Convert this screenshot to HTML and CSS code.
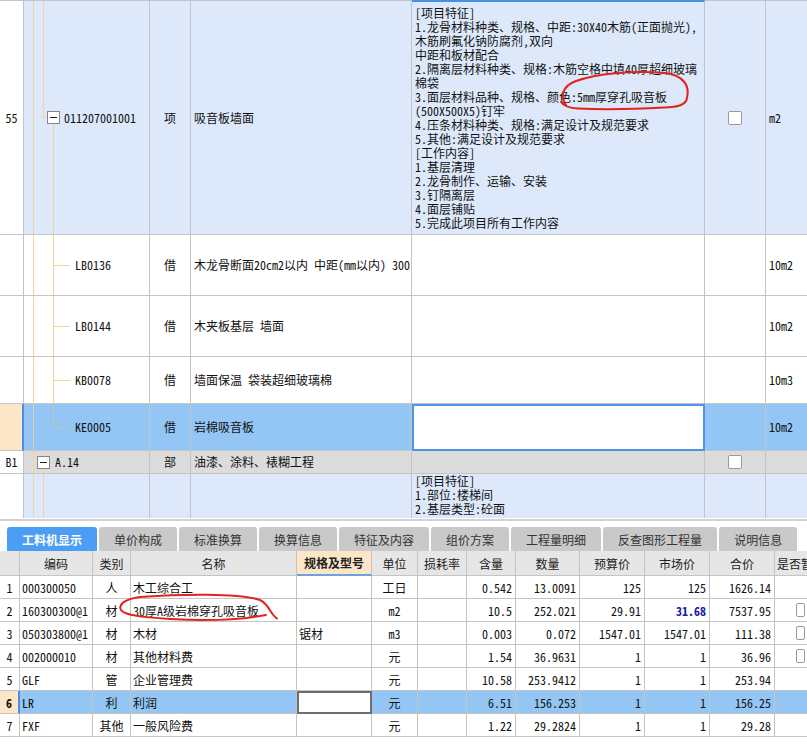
FILE: index.html
```html
<!DOCTYPE html>
<html lang="zh-CN">
<head>
<meta charset="utf-8">
<title>工料机显示</title>
<link rel="stylesheet" href="styles.css">
</head>
<body>
<div class="page">
  <section class="grid-top">
    <div class="row r-item">
      <div class="c c-no">55</div>
      <div class="c c-code tree-item"><span class="tbox"></span><span class="code-txt">011207001001</span></div>
      <div class="c c-type">项</div>
      <div class="c c-name">吸音板墙面</div>
      <div class="c c-feat feat-top">
        <div class="lines">
          <div>[项目特征]</div>
          <div>1.龙骨材料种类、规格、中距:30X40木筋(正面抛光),</div>
          <div>木筋刷氟化钠防腐剂,双向</div>
          <div>中距和板材配合</div>
          <div>2.隔离层材料种类、规格:木筋空格中填40厚超细玻璃</div>
          <div>棉袋</div>
          <div>3.面层材料品种、规格、颜色:5mm厚穿孔吸音板</div>
          <div>(500X500X5)钉牢</div>
          <div>4.压条材料种类、规格:满足设计及规范要求</div>
          <div>5.其他:满足设计及规范要求</div>
          <div>[工作内容]</div>
          <div>1.基层清理</div>
          <div>2.龙骨制作、运输、安装</div>
          <div>3.钉隔离层</div>
          <div>4.面层铺贴</div>
          <div>5.完成此项目所有工作内容</div>
        </div>
      </div>
      <div class="c c-chk"><span class="chk"></span></div>
      <div class="c c-unit">m2</div>
    </div>

    <div class="row r-sub r61">
      <div class="c c-no"></div>
      <div class="c c-code tree-child"><span class="code-txt">LB0136</span></div>
      <div class="c c-type">借</div>
      <div class="c c-name">木龙骨断面20cm2以内 中距(mm以内) 300</div>
      <div class="c c-feat"></div>
      <div class="c c-chk"></div>
      <div class="c c-unit">10m2</div>
    </div>

    <div class="row r-sub r61">
      <div class="c c-no"></div>
      <div class="c c-code tree-child"><span class="code-txt">LB0144</span></div>
      <div class="c c-type">借</div>
      <div class="c c-name">木夹板基层 墙面</div>
      <div class="c c-feat"></div>
      <div class="c c-chk"></div>
      <div class="c c-unit">10m2</div>
    </div>

    <div class="row r-sub r47">
      <div class="c c-no"></div>
      <div class="c c-code tree-child"><span class="code-txt">KB0078</span></div>
      <div class="c c-type">借</div>
      <div class="c c-name">墙面保温 袋装超细玻璃棉</div>
      <div class="c c-feat"></div>
      <div class="c c-chk"></div>
      <div class="c c-unit">10m3</div>
    </div>

    <div class="row r-sel r47">
      <div class="c c-no"></div>
      <div class="c c-code tree-last"><span class="code-txt">KE0005</span></div>
      <div class="c c-type">借</div>
      <div class="c c-name">岩棉吸音板</div>
      <div class="c c-feat edit"></div>
      <div class="c c-chk"></div>
      <div class="c c-unit">10m2</div>
    </div>

    <div class="row r-part">
      <div class="c c-no">B1</div>
      <div class="c c-code tree-part"><span class="tbox"></span><span class="code-txt">A.14</span></div>
      <div class="c c-type">部</div>
      <div class="c c-name">油漆、涂料、裱糊工程</div>
      <div class="c c-feat"></div>
      <div class="c c-chk"><span class="chk"></span></div>
      <div class="c c-unit"></div>
    </div>

    <div class="row r-next">
      <div class="c c-no"></div>
      <div class="c c-code tree-next"></div>
      <div class="c c-type"></div>
      <div class="c c-name"></div>
      <div class="c c-feat feat-next">
        <div class="lines">
          <div>[项目特征]</div>
          <div>1.部位:楼梯间</div>
          <div>2.基层类型:砼面</div>
        </div>
      </div>
      <div class="c c-chk"></div>
      <div class="c c-unit"></div>
    </div>
  </section>

  <div class="split"></div>

  <nav class="tabbar">
    <span class="tab active">工料机显示</span>
    <span class="tab">单价构成</span>
    <span class="tab">标准换算</span>
    <span class="tab">换算信息</span>
    <span class="tab">特征及内容</span>
    <span class="tab">组价方案</span>
    <span class="tab">工程量明细</span>
    <span class="tab">反查图形工程量</span>
    <span class="tab">说明信息</span>
  </nav>

  <section class="btable">
    <div class="brow bhead">
      <div class="b"></div>
      <div class="b ctr">编码</div>
      <div class="b ctr">类别</div>
      <div class="b ctr">名称</div>
      <div class="b ctr hsel">规格及型号</div>
      <div class="b ctr">单位</div>
      <div class="b ctr">损耗率</div>
      <div class="b ctr">含量</div>
      <div class="b ctr">数量</div>
      <div class="b ctr">预算价</div>
      <div class="b ctr">市场价</div>
      <div class="b ctr">合价</div>
      <div class="b last">是否暂估</div>
    </div>

    <div class="brow">
      <div class="b ctr">1</div>
      <div class="b">000300050</div>
      <div class="b ctr">人</div>
      <div class="b">木工综合工</div>
      <div class="b"></div>
      <div class="b ctr">工日</div>
      <div class="b"></div>
      <div class="b num">0.542</div>
      <div class="b num">13.0091</div>
      <div class="b num">125</div>
      <div class="b num">125</div>
      <div class="b num">1626.14</div>
      <div class="b last"></div>
    </div>

    <div class="brow">
      <div class="b ctr">2</div>
      <div class="b">160300300@1</div>
      <div class="b ctr">材</div>
      <div class="b">30厚A级岩棉穿孔吸音板</div>
      <div class="b"></div>
      <div class="b ctr">m2</div>
      <div class="b"></div>
      <div class="b num">10.5</div>
      <div class="b num">252.021</div>
      <div class="b num">29.91</div>
      <div class="b num mkt">31.68</div>
      <div class="b num">7537.95</div>
      <div class="b last"><span class="chk"></span></div>
    </div>

    <div class="brow">
      <div class="b ctr">3</div>
      <div class="b">050303800@1</div>
      <div class="b ctr">材</div>
      <div class="b">木材</div>
      <div class="b">锯材</div>
      <div class="b ctr">m3</div>
      <div class="b"></div>
      <div class="b num">0.003</div>
      <div class="b num">0.072</div>
      <div class="b num">1547.01</div>
      <div class="b num">1547.01</div>
      <div class="b num">111.38</div>
      <div class="b last"><span class="chk"></span></div>
    </div>

    <div class="brow">
      <div class="b ctr">4</div>
      <div class="b">002000010</div>
      <div class="b ctr">材</div>
      <div class="b">其他材料费</div>
      <div class="b"></div>
      <div class="b ctr">元</div>
      <div class="b"></div>
      <div class="b num">1.54</div>
      <div class="b num">36.9631</div>
      <div class="b num">1</div>
      <div class="b num">1</div>
      <div class="b num">36.96</div>
      <div class="b last"><span class="chk"></span></div>
    </div>

    <div class="brow">
      <div class="b ctr">5</div>
      <div class="b">GLF</div>
      <div class="b ctr">管</div>
      <div class="b">企业管理费</div>
      <div class="b"></div>
      <div class="b ctr">元</div>
      <div class="b"></div>
      <div class="b num">10.58</div>
      <div class="b num">253.9412</div>
      <div class="b num">1</div>
      <div class="b num">1</div>
      <div class="b num">253.94</div>
      <div class="b last"></div>
    </div>

    <div class="brow bsel">
      <div class="b ctr rno">6</div>
      <div class="b">LR</div>
      <div class="b ctr">利</div>
      <div class="b">利润</div>
      <div class="b editcell"></div>
      <div class="b ctr">元</div>
      <div class="b"></div>
      <div class="b num">6.51</div>
      <div class="b num">156.253</div>
      <div class="b num">1</div>
      <div class="b num">1</div>
      <div class="b num">156.25</div>
      <div class="b last"></div>
    </div>

    <div class="brow">
      <div class="b ctr">7</div>
      <div class="b">FXF</div>
      <div class="b ctr">其他</div>
      <div class="b">一般风险费</div>
      <div class="b"></div>
      <div class="b ctr">元</div>
      <div class="b"></div>
      <div class="b num">1.22</div>
      <div class="b num">29.2824</div>
      <div class="b num">1</div>
      <div class="b num">1</div>
      <div class="b num">29.28</div>
      <div class="b last"></div>
    </div>
  </section>

  <svg class="marks" width="807" height="752" viewBox="0 0 807 752" aria-hidden="true">
    <path d="M566,105 C560,97 562,86 576,81 C596,74 632,70 664,73 C684,75 690,86 687,98 C686,105 678,107 664,107.5 C636,109 600,109.5 578,108.5 C568,108 563,105 561,102" />
    <path d="M277,618.5 C270,614 269,604 260,600 C240,593 180,594 140,597 C124,599 118,605 121,610 C124,615 140,617 170,619 C205,621 240,620 266,615" />
  </svg>
</div>
</body>
</html>
```

FILE: styles.css
```css
* { box-sizing: border-box; }

html, body {
  margin: 0;
  padding: 0;
  background: #ffffff;
}

body {
  font-family: "Noto Sans Mono CJK SC", "Noto Sans CJK SC", sans-serif;
  font-size: 12px;
  color: #111111;
}

.page {
  position: relative;
  width: 807px;
  height: 752px;
  overflow: hidden;
}

/* ---------- top grid ---------- */
.grid-top {
  border-top: 1px solid #c4c4c4;
}

.row {
  display: grid;
  grid-template-columns: 24px 126px 41px 221px 293px 61px 42px;
}

.c {
  border-right: 1px solid #c4c4c4;
  border-bottom: 1px solid #c4c4c4;
  display: flex;
  align-items: center;
  white-space: nowrap;
  overflow: hidden;
  line-height: 14px;
}

.c-no { justify-content: center; background: #ffffff; }
.c-type { justify-content: center; }
.c-name { padding-left: 3px; }
.c-feat { padding-left: 3px; }
.c-chk { justify-content: center; }
.c-unit { padding-left: 3px; border-right: none; }

.r-item { height: 234px; }
.r-item .c:not(.c-no) { background: #dde9fb; }
.r-item .c-feat { border-top: 2px solid #4a90e2; margin-top: -1px; }

.r61 { height: 61px; }
.r47 { height: 47px; }

.r-sel .c:not(.c-no) { background: #93c6f4; }
.r-sel .c-no { background: #fde6c8; border-right: 2px solid #4a8fe0; }
.r-sel .c-feat.edit {
  background: #ffffff;
  border: 2px solid #4f94e4;
}

.r-part { height: 23px; }
.r-part .c:not(.c-no) { background: #dcdcdc; }

.r-next { height: 44px; }
.r-next .c:not(.c-no) { background: #dde9fb; border-bottom: none; }
.r-next .c-no { border-bottom: none; }

.lines div { height: 14px; line-height: 14px; }
.feat-next { align-items: flex-start; }
.feat-next .lines { margin-top: 0; }

/* tree */
.c-code { position: relative; }
.code-txt { color: #111; }

.tree-item {
  padding-left: 23px;
  background:
    linear-gradient(#efd3a2, #efd3a2) 9px 0 / 1px 100% no-repeat,
    linear-gradient(#efd3a2, #efd3a2) 19px 0 / 1px 50% no-repeat,
    linear-gradient(#efd3a2, #efd3a2) 19px 50% / 4px 1px no-repeat,
    linear-gradient(#efd3a2, #efd3a2) 29px 100% / 1px calc(50% - 6px) no-repeat,
    #dde9fb !important;
}
.tree-item .code-txt { margin-left: 4px; }

.tree-child {
  padding-left: 51px;
  background:
    linear-gradient(#efd3a2, #efd3a2) 9px 0 / 1px 100% no-repeat,
    linear-gradient(#efd3a2, #efd3a2) 29px 0 / 1px 100% no-repeat,
    linear-gradient(#efd3a2, #efd3a2) 29px 50% / 17px 1px no-repeat,
    #ffffff;
}

.tree-last {
  padding-left: 51px;
  background:
    linear-gradient(#e2cfa8, #e2cfa8) 9px 0 / 1px 100% no-repeat,
    linear-gradient(#c9c2ae, #c9c2ae) 29px 0 / 1px 50% no-repeat,
    linear-gradient(#c9c2ae, #c9c2ae) 29px 50% / 17px 1px no-repeat,
    #93c6f4 !important;
}

.tree-part {
  padding-left: 13px;
  background:
    linear-gradient(#efd3a2, #efd3a2) 9px 0 / 1px 100% no-repeat,
    linear-gradient(#efd3a2, #efd3a2) 19px 100% / 1px calc(50% - 6px) no-repeat,
    #dcdcdc !important;
}
.tree-part .code-txt { margin-left: 5px; }

.tree-next {
  background:
    linear-gradient(#efd3a2, #efd3a2) 9px 0 / 1px 100% no-repeat,
    linear-gradient(#efd3a2, #efd3a2) 19px 0 / 1px 100% no-repeat,
    #dde9fb !important;
}

.tbox {
  flex: none;
  width: 13px;
  height: 13px;
  border: 1px solid #868686;
  background: #ffffff;
  position: relative;
}
.tbox::after {
  content: "";
  position: absolute;
  left: 2px;
  right: 2px;
  top: 5px;
  height: 1px;
  background: #222;
}

.chk {
  display: inline-block;
  width: 14px;
  height: 14px;
  border: 1px solid #9a9a9a;
  border-radius: 2px;
  background: #ffffff;
}

/* ---------- splitter & tabs ---------- */
.split {
  height: 2px;
  margin-top: 1px;
  background: #d2d2d2;
}

.tabbar {
  display: flex;
  gap: 2px;
  padding: 6px 0 0 7px;
  height: 30px;
  background: #ffffff;
}

.tab {
  height: 24px;
  padding: 0 15px;
  display: flex;
  align-items: center;
  background: #c9c9c9;
  color: #333333;
  border-radius: 3px 3px 0 0;
  font-family: "Noto Sans CJK SC", sans-serif;
  font-size: 12px;
  white-space: nowrap;
}
.tab.active {
  background: #4b9ef3;
  color: #ffffff;
  font-weight: bold;
}

/* ---------- bottom table ---------- */
.brow {
  display: grid;
  grid-template-columns: 20px 73px 38px 166px 75px 46px 49px 49px 64px 65px 65px 65px 32px;
  height: 23px;
}

.b {
  border-right: 1px solid #c4c4c4;
  border-bottom: 1px solid #c4c4c4;
  display: flex;
  align-items: center;
  padding: 0 2px;
  white-space: nowrap;
  overflow: hidden;
  background: #ffffff;
}
.b.ctr { justify-content: center; }
.b.num { justify-content: flex-end; padding-right: 3px; }
.b.last { border-right: none; padding-left: 21px; }

.bhead { height: 25px; }
.bhead .b {
  background: #e6e6e6;
  font-family: "Noto Sans CJK SC", sans-serif;
  color: #222;
}
.bhead .b.last { padding-left: 2px; }
.bhead .hsel {
  background: #fde6c8;
  font-weight: bold;
  border-bottom: 2px solid #6fa2da;
}

.mkt { color: #1a1aa6; font-weight: bold; }

.bsel .b { background: #93c6f4; }
.bsel .rno {
  background: #fde6c8;
  font-weight: bold;
  border-right: 2px solid #4a8fe0;
}
.bsel .editcell {
  background: #ffffff;
  border: 2px solid #6e6e6e;
}

/* ---------- red hand-drawn annotations ---------- */
.marks {
  position: absolute;
  left: 0;
  top: 0;
  pointer-events: none;
}
.marks path {
  fill: none;
  stroke: #e3231b;
  stroke-width: 2;
  stroke-linecap: round;
  stroke-linejoin: round;
}
```
